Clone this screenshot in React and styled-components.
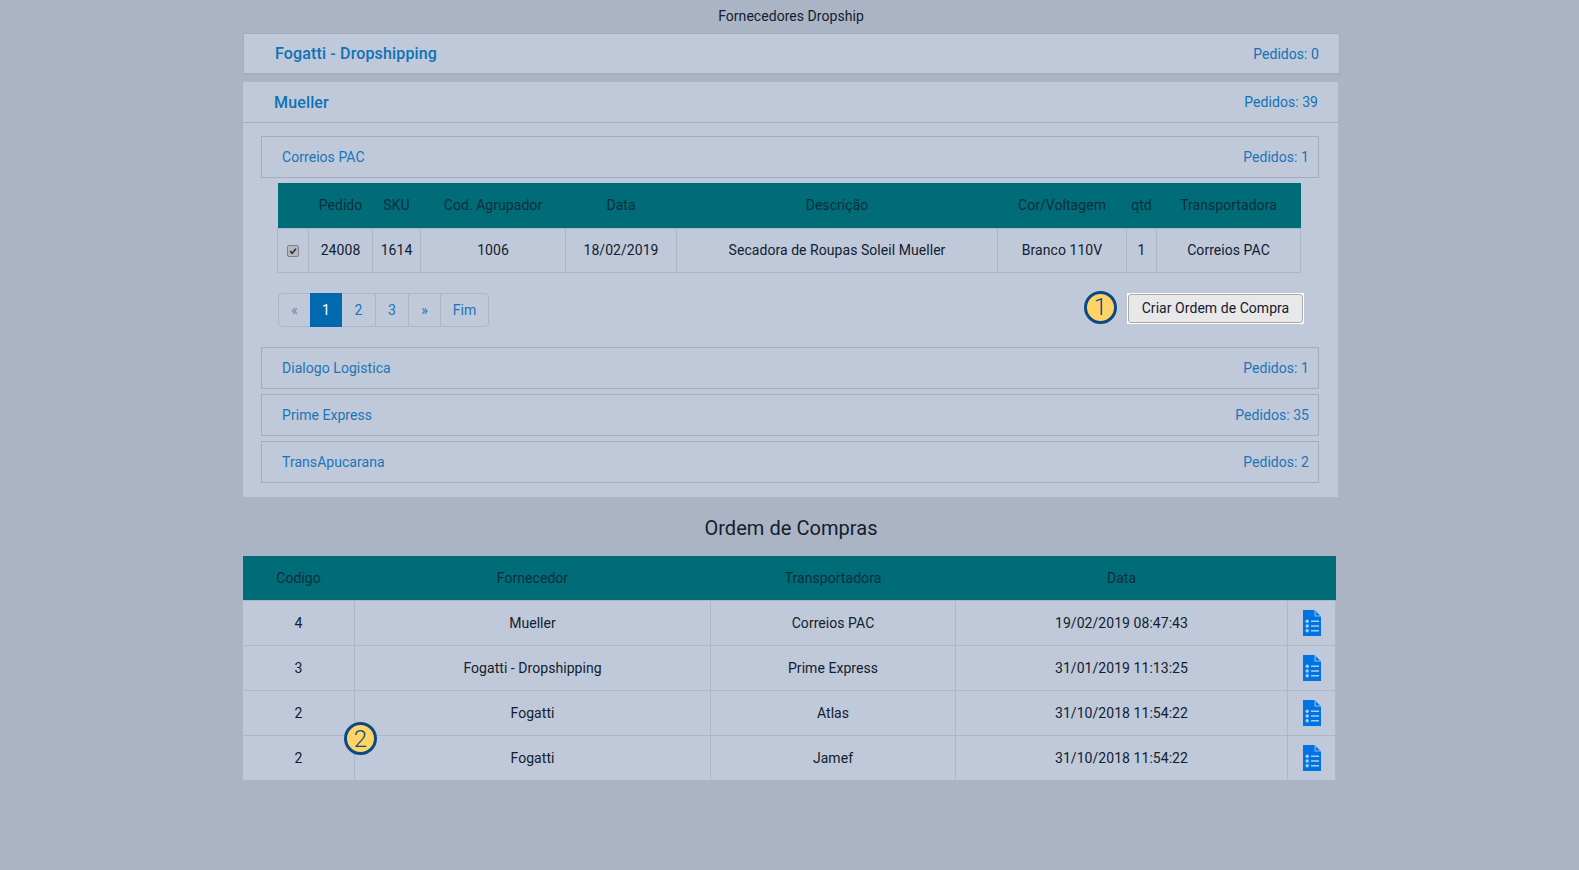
import styled, { createGlobalStyle } from "styled-components";

const GlobalStyle = createGlobalStyle`
  * { box-sizing: border-box; }
  html, body { margin: 0; height: 100%; }
  body {
    background: #abb4c4;
    color: #12202f;
    font-family: Roboto, "Liberation Sans", sans-serif;
    font-size: 14px;
    letter-spacing: 0.05px;
  }
`;

const Page = styled.div`
  width: 1094px;
  margin-left: 243px;
  min-height: 870px;
  position: relative;
`;

const PageTitle = styled.div`
  height: 33px;
  line-height: 33px;
  text-align: center;
  margin-right: -2px;
`;

const Panel = styled.section`
  background: #bfc9da;
  margin-bottom: ${(p) => (p.$wide ? "7px" : "6px")};
  margin-right: ${(p) => (p.$wide ? "-3px" : "-1px")};
  border: ${(p) => (p.$wide ? "1px solid #a3adc0" : "none")};
  border-bottom-width: ${(p) => (p.$wide ? "2px" : "0")};
`;

const PanelHead = styled.div`
  display: flex;
  justify-content: space-between;
  align-items: center;
  height: ${(p) => (p.$open ? "41px" : "39px")};
  padding: 0 20px 0 31px;
  color: #0f72b5;
  border-bottom: ${(p) => (p.$open ? "1px solid #a3adc0" : "none")};
`;

const PanelName = styled.span`
  font-size: 16px;
  font-weight: 500;
  letter-spacing: 0.15px;
`;

const PanelBody = styled.div`
  padding: 13px 19px 9px 18px;
`;

const Carrier = styled.div`
  display: flex;
  justify-content: space-between;
  align-items: center;
  height: 42px;
  padding: 0 9px 0 20px;
  margin-bottom: 5px;
  color: #1a75b8;
  border: 1px solid #a3adc0;
`;

const CarrierBody = styled.div`
  padding: 0 17px;
`;

const Table = styled.table`
  border-collapse: collapse;
  table-layout: fixed;
  width: ${(p) => p.$width}px;
  margin-left: -1px;
`;

const HeadCell = styled.th`
  background: #006c78;
  color: #0d2c3d;
  font-weight: 400;
  height: 45px;
  padding: 0;
  text-align: center;
`;

const Cell = styled.td`
  height: ${(p) => (p.$short ? "44px" : "45px")};
  padding: 0;
  text-align: center;
  background: #bfc9da;
  border: 1px solid #abb6c8;
`;

const Checkbox = styled.input`
  appearance: none;
  display: inline-block;
  width: 12px;
  height: 12px;
  margin: 0;
  vertical-align: middle;
  border: 1px solid #7d828c;
  border-radius: 2px;
  background: #b6b9c2 url("data:image/svg+xml,%3Csvg xmlns='http://www.w3.org/2000/svg' viewBox='0 0 12 12'%3E%3Cpath d='M2.6 6.2l2.4 2.5 4.6-5.4' fill='none' stroke='%23333' stroke-width='2'/%3E%3C/svg%3E") center / 100% no-repeat;
`;

const Actions = styled.div`
  display: flex;
  justify-content: space-between;
  align-items: flex-start;
  margin: 20px -2px 20px 0;
`;

const Pager = styled.nav`
  display: flex;
  height: 34px;
  border: 1px solid #abb6c8;
  border-radius: 4px;
`;

const PageLink = styled.a`
  display: flex;
  align-items: center;
  justify-content: center;
  width: ${(p) => p.$width}px;
  color: ${(p) => (p.$active ? "#fff" : p.$muted ? "#6f7f95" : "#1a75b8")};
  background: ${(p) => (p.$active ? "#0069af" : "transparent")};
  border-left: ${(p) => (p.$first || p.$active ? "none" : "1px solid #abb6c8")};
  margin: ${(p) => (p.$active ? "-1px 0" : "0")};
`;

const OrderAction = styled.div`
  display: flex;
  align-items: flex-end;
  gap: 10px;
  margin-top: -2px;
`;

const Badge = styled.span`
  display: flex;
  align-items: center;
  justify-content: center;
  width: 33px;
  height: 33px;
  border-radius: 50%;
  background: #ffd466;
  border: 3px solid #0b4a84;
  color: #0b4a84;
  font-size: 24px;
  font-weight: 300;
  line-height: 1;
`;

const FloatingBadge = styled(Badge)`
  position: absolute;
  left: 101px;
  top: 722px;
`;

const ButtonFrame = styled.span`
  display: block;
  padding: 1px;
  background: #fff;
`;

const CreateButton = styled.button`
  display: block;
  width: 175px;
  height: 29px;
  padding: 0;
  background: #e8e8e8;
  color: #12202f;
  border: 1px solid #a9a9a9;
  border-radius: 3px;
  font-family: inherit;
  font-size: 14px;
  letter-spacing: inherit;
`;

const SectionTitle = styled.h2`
  margin: 0;
  height: 53px;
  line-height: 50px;
  text-align: center;
  font-size: 20px;
  font-weight: 400;
  margin-right: -2px;
`;

const DocButton = styled.span`
  display: flex;
  justify-content: center;
`;

function DocIcon() {
  return (
    <svg width="18" height="26" viewBox="0 0 18 26">
      <path d="M0 0h11.5L18 6.5V26H0z" fill="#0073e3" />
      <path d="M11.5 0L18 6.5h-6.5z" fill="#8dbbf0" />
      <path d="M12.6 1.2l4.2 4.3h-4.2z" fill="#0073e3" />
      <circle cx="4.2" cy="11.3" r="1.7" fill="#a9cdf5" />
      <circle cx="4.2" cy="16" r="1.7" fill="#a9cdf5" />
      <circle cx="4.2" cy="20.7" r="1.7" fill="#a9cdf5" />
      <path d="M8 11.3h8M8 16h8M8 20.7h8" stroke="#a9cdf5" strokeWidth="1.4" />
    </svg>
  );
}

const otherCarriers = [
  { name: "Dialogo Logistica", total: 1 },
  { name: "Prime Express", total: 35 },
  { name: "TransApucarana", total: 2 },
];

const itemCols = [31, 64, 48, 145, 111, 321, 129, 30, 144];
const itemHeads = ["", "Pedido", "SKU", "Cod. Agrupador", "Data", "Descrição", "Cor/Voltagem", "qtd", "Transportadora"];
const itemRow = ["24008", "1614", "1006", "18/02/2019", "Secadora de Roupas Soleil Mueller", "Branco 110V", "1", "Correios PAC"];

const orderCols = [112, 356, 245, 332, 48];
const orderHeads = ["Codigo", "Fornecedor", "Transportadora", "Data", ""];
const orders = [
  ["4", "Mueller", "Correios PAC", "19/02/2019 08:47:43"],
  ["3", "Fogatti - Dropshipping", "Prime Express", "31/01/2019 11:13:25"],
  ["2", "Fogatti", "Atlas", "31/10/2018 11:54:22"],
  ["2", "Fogatti", "Jamef", "31/10/2018 11:54:22"],
];

export default function App() {
  return (
    <>
      <GlobalStyle />
      <Page>
        <PageTitle>Fornecedores Dropship</PageTitle>

        <Panel $wide>
          <PanelHead>
            <PanelName>Fogatti - Dropshipping</PanelName>
            <span>Pedidos: 0</span>
          </PanelHead>
        </Panel>

        <Panel>
          <PanelHead $open>
            <PanelName>Mueller</PanelName>
            <span>Pedidos: 39</span>
          </PanelHead>
          <PanelBody>
            <Carrier>
              <span>Correios PAC</span>
              <span>Pedidos: 1</span>
            </Carrier>
            <CarrierBody>
              <Table $width={1023}>
                <colgroup>
                  {itemCols.map((w, i) => (
                    <col key={i} width={w} />
                  ))}
                </colgroup>
                <thead>
                  <tr>
                    {itemHeads.map((h, i) => (
                      <HeadCell key={i}>{h}</HeadCell>
                    ))}
                  </tr>
                </thead>
                <tbody>
                  <tr>
                    <Cell $short>
                      <Checkbox type="checkbox" defaultChecked />
                    </Cell>
                    {itemRow.map((v, i) => (
                      <Cell $short key={i}>{v}</Cell>
                    ))}
                  </tr>
                </tbody>
              </Table>
              <Actions>
                <Pager>
                  <PageLink $first $muted $width={31}>«</PageLink>
                  <PageLink $active $width={32}>1</PageLink>
                  <PageLink $first $width={33}>2</PageLink>
                  <PageLink $width={33}>3</PageLink>
                  <PageLink $width={32}>»</PageLink>
                  <PageLink $width={48}>Fim</PageLink>
                </Pager>
                <OrderAction>
                  <Badge>1</Badge>
                  <ButtonFrame>
                    <CreateButton>Criar Ordem de Compra</CreateButton>
                  </ButtonFrame>
                </OrderAction>
              </Actions>
            </CarrierBody>
            {otherCarriers.map((c) => (
              <Carrier key={c.name}>
                <span>{c.name}</span>
                <span>Pedidos: {c.total}</span>
              </Carrier>
            ))}
          </PanelBody>
        </Panel>

        <SectionTitle>Ordem de Compras</SectionTitle>
        <Table $width={1093}>
          <colgroup>
            {orderCols.map((w, i) => (
              <col key={i} width={w} />
            ))}
          </colgroup>
          <thead>
            <tr>
              {orderHeads.map((h, i) => (
                <HeadCell key={i}>{h}</HeadCell>
              ))}
            </tr>
          </thead>
          <tbody>
            {orders.map((o) => (
              <tr key={o[3] + o[2]}>
                {o.map((v, i) => (
                  <Cell key={i}>{v}</Cell>
                ))}
                <Cell>
                  <DocButton>
                    <DocIcon />
                  </DocButton>
                </Cell>
              </tr>
            ))}
          </tbody>
        </Table>
        <FloatingBadge>2</FloatingBadge>
      </Page>
    </>
  );
}
